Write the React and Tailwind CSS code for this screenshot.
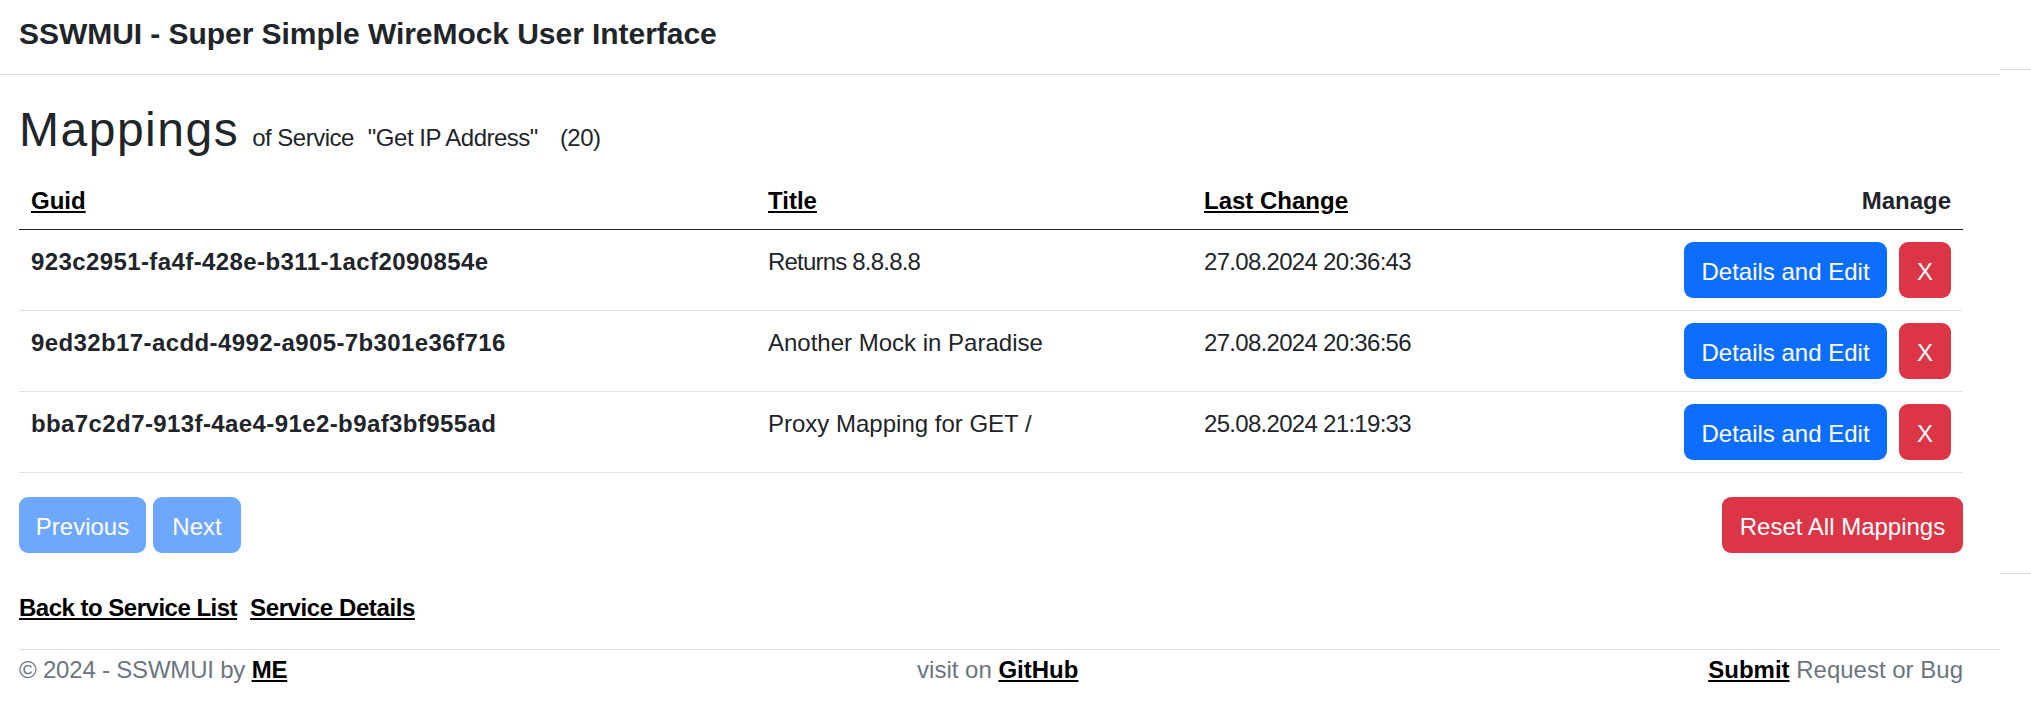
import React from "react";

const rows = [
  { guid: "923c2951-fa4f-428e-b311-1acf2090854e", title: "Returns 8.8.8.8", date: "27.08.2024 20:36:43", tight: true },
  { guid: "9ed32b17-acdd-4992-a905-7b301e36f716", title: "Another Mock in Paradise", date: "27.08.2024 20:36:56", tight: false },
  { guid: "bba7c2d7-913f-4ae4-91e2-b9af3bf955ad", title: "Proxy Mapping for GET /", date: "25.08.2024 21:19:33", tight: false },
];

function Btn({ className, children }) {
  return (
    <button
      type="button"
      className={
        "h-[56px] flex items-center justify-center pt-[3px] rounded-[9px] text-white text-[24px] leading-[36px] " +
        className
      }
    >
      {children}
    </button>
  );
}

export default function App() {
  return (
    <div className="w-[2031px] flex bg-white text-[#212529] font-['Liberation_Sans',Arial,sans-serif]">
      <div className="w-[2000px] flex flex-col">
        <header className="h-[75px] border-b border-[#dee2e6] pl-[19px] pt-[11px]">
          <div className="text-[30px] font-bold leading-[45px] tracking-[-0.05px]">SSWMUI - Super Simple WireMock User Interface</div>
        </header>

        <main className="pl-[19px] pr-[37px]">
          <h2 className="mt-[26px] mb-[10px] h-[58px] leading-[58px] text-[48px] font-normal whitespace-nowrap">
            <span className="tracking-[1.5px]">Mappings</span>
            <span className="text-[24px] leading-[24px] ml-[13px] tracking-[-0.5px]">of Service</span>
            <span className="text-[24px] leading-[24px] ml-[14px] tracking-[-0.5px]">"Get IP Address"</span>
            <span className="text-[24px] leading-[24px] ml-[22px] tracking-[-0.5px]">(20)</span>
          </h2>

          <div className="w-[1944px]">
            <div className="grid grid-cols-[737px_436px_480px_291px] h-[61px] border-b border-[#212529] text-[24px] leading-[36px] font-bold">
              <div className="px-[12px] pt-[14px]"><a className="underline text-black">Guid</a></div>
              <div className="px-[12px] pt-[14px]"><a className="underline text-black">Title</a></div>
              <div className="px-[12px] pt-[14px]"><a className="underline text-black">Last Change</a></div>
              <div className="px-[12px] pt-[14px] text-right">Manage</div>
            </div>
            {rows.map((r) => (
              <div
                key={r.guid}
                className="grid grid-cols-[737px_436px_480px_291px] h-[81px] border-b border-[#dee2e6] text-[24px] leading-[36px]"
              >
                <div className="px-[12px] pt-[14px] font-bold tracking-[0.4px] whitespace-nowrap">{r.guid}</div>
                <div className={"px-[12px] pt-[14px] whitespace-nowrap " + (r.tight ? "tracking-[-0.8px]" : "")}>{r.title}</div>
                <div className="px-[12px] pt-[14px] tracking-[-0.7px] whitespace-nowrap">{r.date}</div>
                <div className="pt-[12px] pr-[12px] flex justify-end gap-[12px]">
                  <Btn className="w-[203px] bg-[#0d6efd]">Details and Edit</Btn>
                  <Btn className="w-[52px] bg-[#dc3545]">X</Btn>
                </div>
              </div>
            ))}
          </div>

          <div className="mt-[24px] flex justify-between">
            <div className="flex gap-[7px]">
              <Btn className="w-[127px] bg-[#6ea8fe]">Previous</Btn>
              <Btn className="w-[88px] bg-[#6ea8fe]">Next</Btn>
            </div>
            <Btn className="w-[241px] bg-[#dc3545]">Reset All Mappings</Btn>
          </div>

          <div className="mt-[37px] text-[24px] leading-[36px] font-bold text-black whitespace-nowrap">
            <a className="underline tracking-[-0.5px]">Back to Service List</a>
            <a className="underline tracking-[-0.4px] ml-[13px]">Service Details</a>
          </div>
        </main>

        <footer className="mt-[23px] ml-[19px] border-t border-[#dee2e6] pr-[37px] pt-[2px] pb-[14px] flex justify-between text-[24px] leading-[36px] text-[#6c757d] whitespace-nowrap">
          <div className="tracking-[-0.2px]">
            © 2024 - SSWMUI by <a className="underline font-bold text-black">ME</a>
          </div>
          <div>
            visit on <a className="underline font-bold text-black">GitHub</a>
          </div>
          <div>
            <a className="underline font-bold text-black">Submit</a> Request or Bug
          </div>
        </footer>
      </div>
      <div className="w-[31px] flex flex-col">
        <div className="mt-[69px] border-t border-[#dee2e6]"></div>
        <div className="mt-[503px] border-t border-[#dee2e6]"></div>
      </div>
    </div>
  );
}
